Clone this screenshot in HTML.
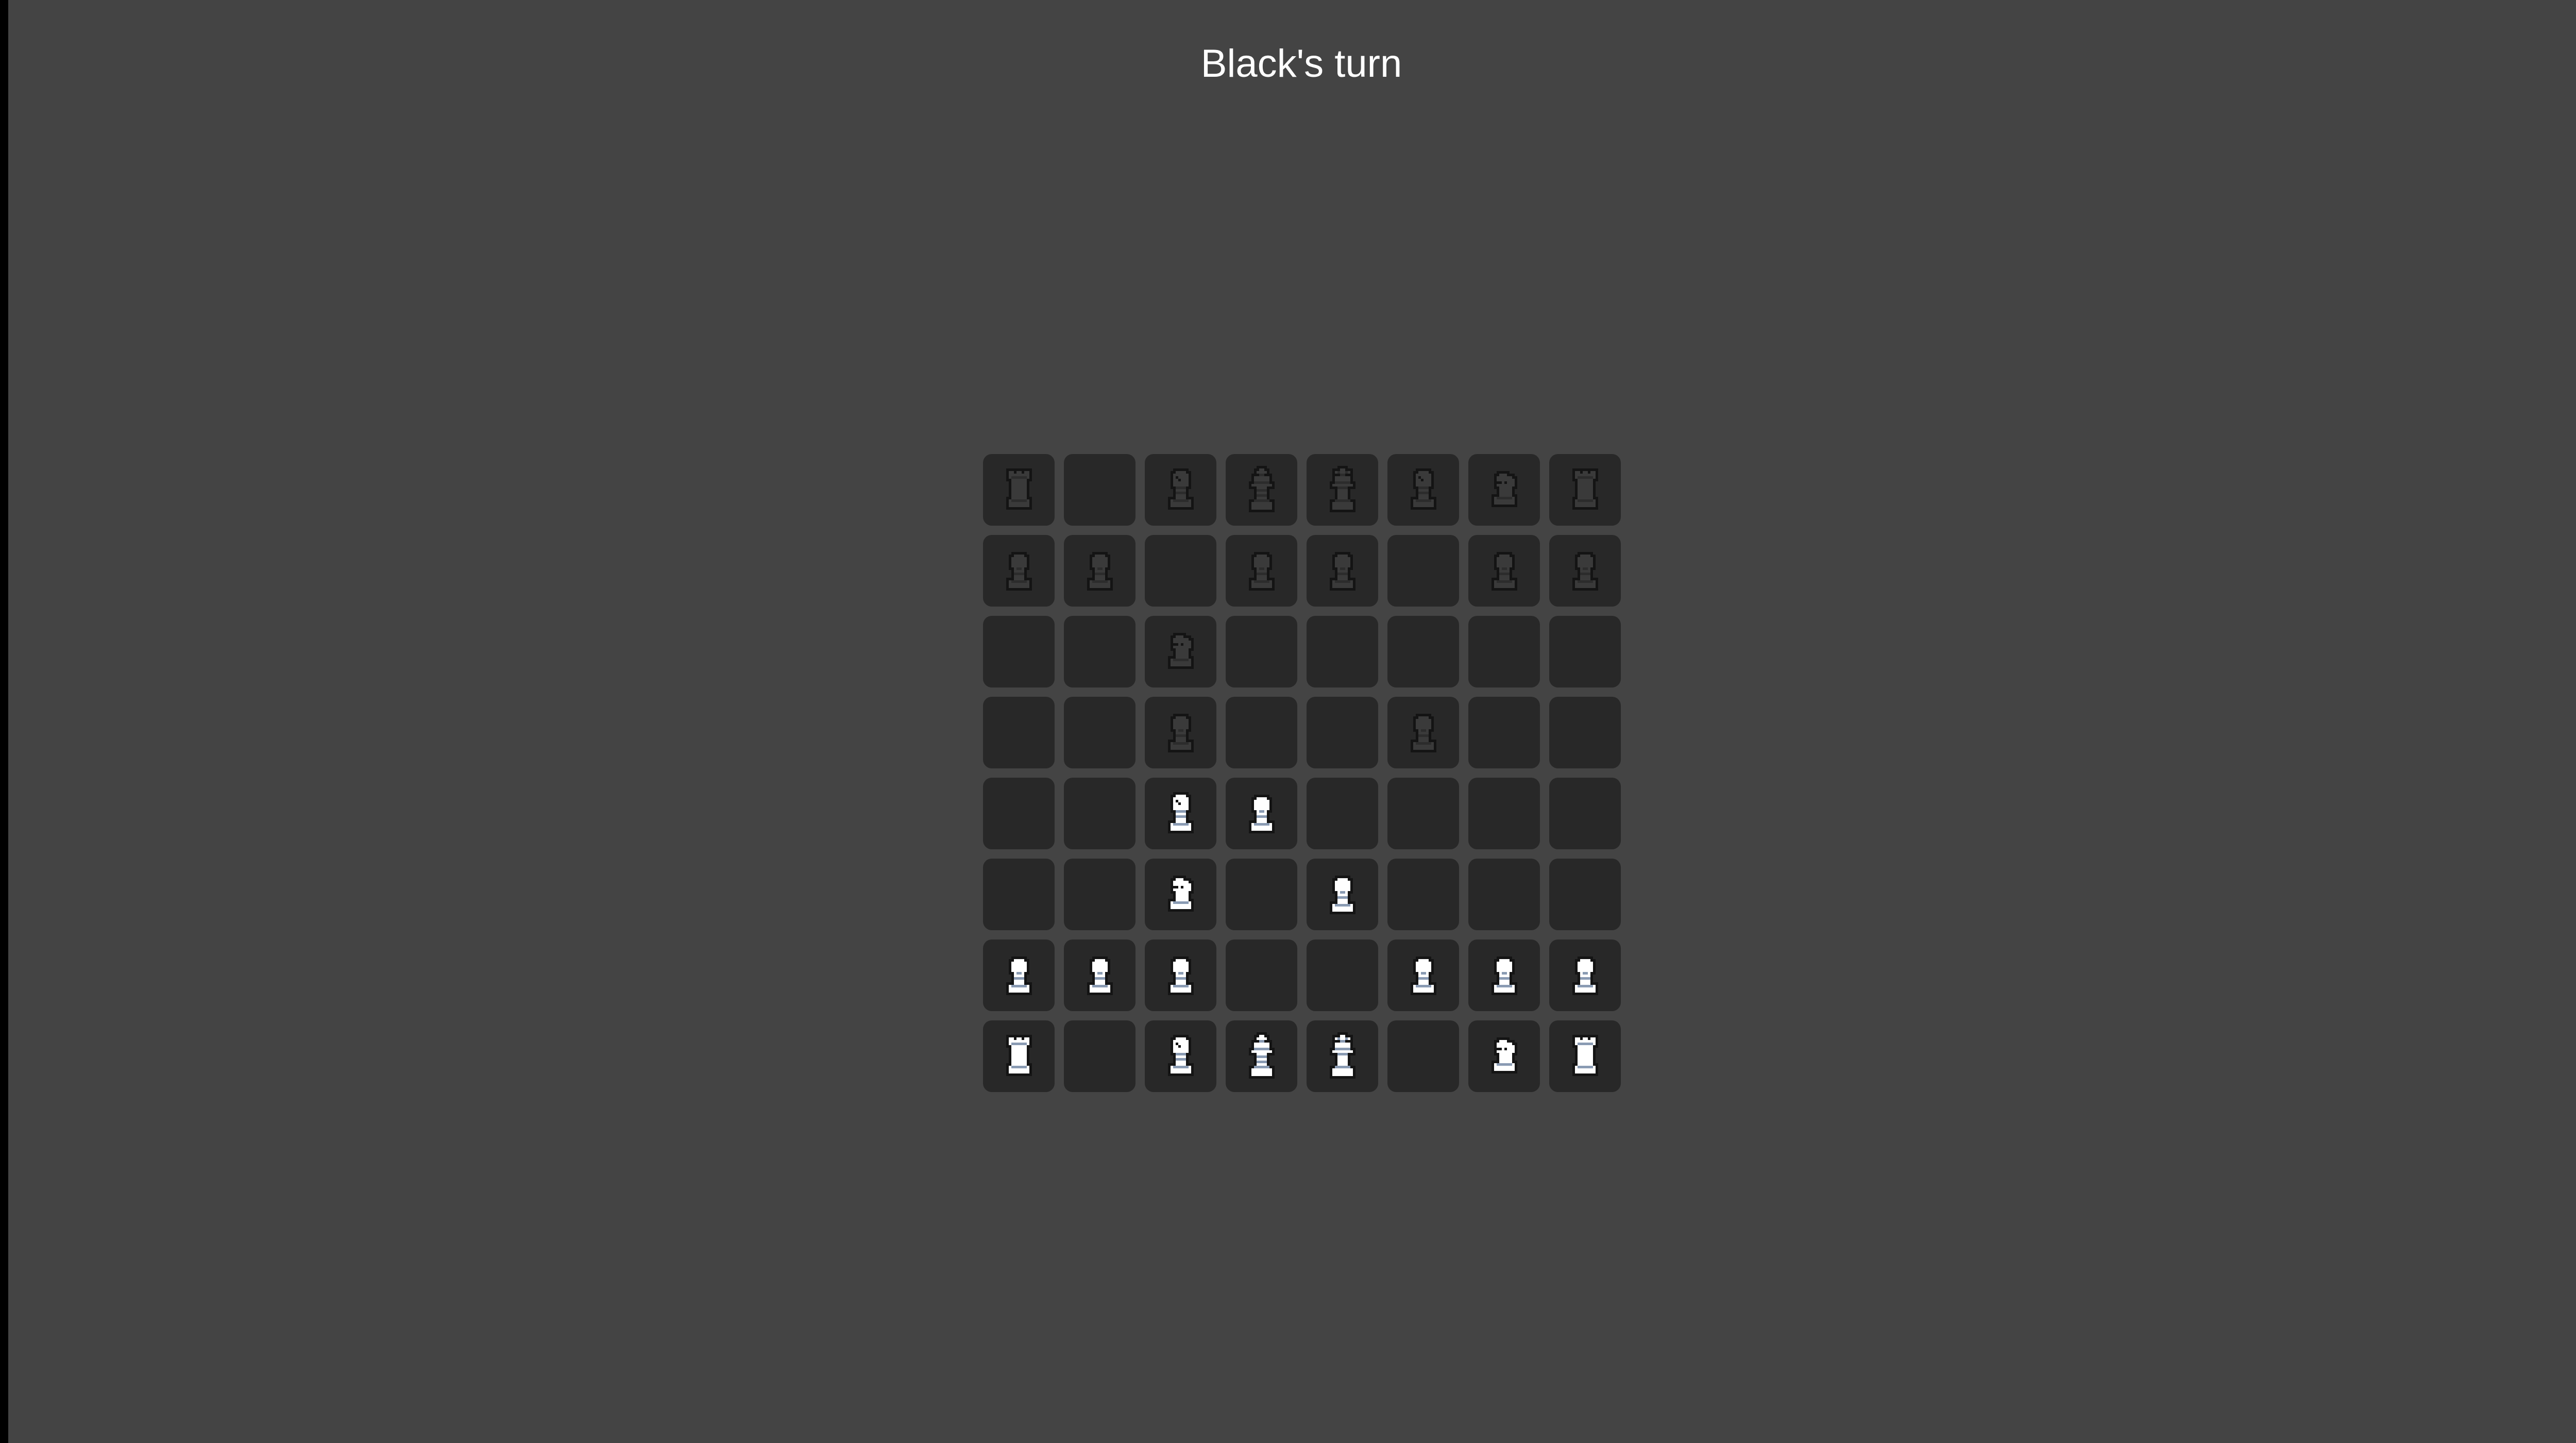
<!DOCTYPE html>
<html><head><meta charset="utf-8"><style>
html,body{margin:0;padding:0;width:5074px;height:2800px;background:#000;overflow:hidden}
#main{position:absolute;left:16px;top:0;width:5020px;height:2800px;background:#444444}
h1{position:absolute;left:0;width:5020px;top:74px;margin:0;text-align:center;color:#fff;font:400 76px "Liberation Sans",sans-serif;line-height:100px}
#board{position:absolute;left:1876px;top:881px;width:1240px;height:1240px}
.sq{position:absolute;width:139px;height:139px;background:#282828;border-radius:17px}
.sq svg{position:absolute;left:30px;top:18px;width:80px;height:100px}
</style></head><body>
<svg width="0" height="0" style="position:absolute">
<defs>
<symbol id="pawn" viewBox="0 0 16 20"><g stroke-width="2" stroke="#141414" stroke-linejoin="miter"><rect x="6" y="4" width="4" height="1"/><rect x="5" y="5" width="6" height="4"/><rect x="6" y="9" width="4" height="5"/><rect x="4" y="14" width="8" height="3"/></g><g fill="var(--f)"><rect x="6" y="4" width="4" height="1"/><rect x="5" y="5" width="6" height="4"/><rect x="6" y="9" width="4" height="5"/><rect x="4" y="14" width="8" height="3"/></g><g fill="var(--s)"><rect x="7" y="9" width="2" height="1"/><rect x="6" y="11" width="4" height="1"/><rect x="5" y="14" width="6" height="1"/></g></symbol>
<symbol id="rook" viewBox="0 0 16 20"><g stroke-width="2" stroke="#141414"><rect x="4" y="3" width="8" height="3"/><rect x="5" y="6" width="6" height="8"/><rect x="4" y="14" width="8" height="3"/></g><g fill="var(--f)"><rect x="4" y="3" width="8" height="3"/><rect x="5" y="6" width="6" height="8"/><rect x="4" y="14" width="8" height="3"/></g><g fill="#141414"><rect x="6" y="3" width="1" height="1"/><rect x="9" y="3" width="1" height="1"/></g><g fill="var(--s)"><rect x="5" y="5" width="6" height="1"/><rect x="5" y="14" width="6" height="1"/></g></symbol>
<symbol id="bishop" viewBox="0 0 16 20"><g stroke-width="2" stroke="#141414"><rect x="6" y="3" width="4" height="1"/><rect x="5" y="4" width="6" height="5"/><rect x="6" y="9" width="4" height="5"/><rect x="4" y="14" width="8" height="3"/></g><g fill="var(--f)"><rect x="6" y="3" width="4" height="1"/><rect x="5" y="4" width="6" height="5"/><rect x="6" y="9" width="4" height="5"/><rect x="4" y="14" width="8" height="3"/></g><g fill="#141414"><rect x="6" y="5" width="1" height="1"/><rect x="7" y="6" width="1" height="1"/></g><g fill="var(--s)"><rect x="6" y="9" width="4" height="1"/><rect x="6" y="11" width="4" height="1"/><rect x="5" y="14" width="6" height="1"/></g></symbol>
<symbol id="knight" viewBox="0 0 16 20"><g stroke-width="2" stroke="#141414"><rect x="6" y="4" width="3" height="1"/><rect x="5" y="5" width="6" height="1"/><rect x="5" y="6" width="7" height="3"/><rect x="6" y="9" width="5" height="4"/><rect x="4" y="13" width="8" height="3"/></g><g fill="var(--f)"><rect x="6" y="4" width="3" height="1"/><rect x="5" y="5" width="6" height="1"/><rect x="5" y="6" width="7" height="3"/><rect x="6" y="9" width="5" height="4"/><rect x="4" y="13" width="8" height="3"/></g><g fill="#141414"><rect x="8" y="7" width="1" height="1"/><rect x="5" y="7" width="2" height="1"/></g><g fill="var(--s)"><rect x="5" y="13" width="6" height="1"/></g></symbol>
<symbol id="queen" viewBox="0 0 16 20"><g stroke-width="2" stroke="#141414"><rect x="7" y="2" width="2" height="1"/><rect x="6" y="3" width="4" height="1"/><rect x="7" y="4" width="2" height="1"/><rect x="5" y="5" width="6" height="3"/><rect x="4" y="8" width="8" height="1"/><rect x="6" y="9" width="4" height="6"/><rect x="4" y="15" width="8" height="3"/></g><g fill="var(--f)"><rect x="7" y="2" width="2" height="1"/><rect x="6" y="3" width="4" height="1"/><rect x="7" y="4" width="2" height="1"/><rect x="5" y="5" width="6" height="3"/><rect x="4" y="8" width="8" height="1"/><rect x="6" y="9" width="4" height="6"/><rect x="4" y="15" width="8" height="3"/></g><g fill="var(--s)"><rect x="7" y="4" width="2" height="1"/><rect x="5" y="7" width="6" height="1"/><rect x="6" y="10" width="4" height="1"/><rect x="6" y="12" width="4" height="1"/><rect x="5" y="14" width="6" height="1"/></g></symbol>
<symbol id="king" viewBox="0 0 16 20"><g stroke-width="2" stroke="#141414"><rect x="7" y="2" width="2" height="3"/><rect x="5" y="3" width="6" height="1"/><rect x="5" y="5" width="6" height="3"/><rect x="4" y="8" width="8" height="1"/><rect x="6" y="9" width="4" height="6"/><rect x="4" y="15" width="8" height="3"/></g><g fill="var(--f)"><rect x="7" y="2" width="2" height="3"/><rect x="5" y="3" width="6" height="1"/><rect x="5" y="5" width="6" height="3"/><rect x="4" y="8" width="8" height="1"/><rect x="6" y="9" width="4" height="6"/><rect x="4" y="15" width="8" height="3"/></g><g fill="var(--s)"><rect x="6" y="3" width="1" height="1"/><rect x="9" y="3" width="1" height="1"/><rect x="7" y="4" width="2" height="1"/><rect x="5" y="7" width="6" height="1"/><rect x="6" y="9" width="4" height="1"/><rect x="5" y="14" width="6" height="1"/></g></symbol>
</defs></svg>
<div id="main"><h1>Black's turn</h1>
<div id="board">
<div class="sq" style="left:16px;top:0"><svg style="--f:#3a3a3a;--s:#2c2c2c"><use href="#rook"/></svg></div>
<div class="sq" style="left:173px;top:0"></div>
<div class="sq" style="left:330px;top:0"><svg style="--f:#3a3a3a;--s:#2c2c2c"><use href="#bishop"/></svg></div>
<div class="sq" style="left:487px;top:0"><svg style="--f:#3a3a3a;--s:#2c2c2c"><use href="#queen"/></svg></div>
<div class="sq" style="left:644px;top:0"><svg style="--f:#3a3a3a;--s:#2c2c2c"><use href="#king"/></svg></div>
<div class="sq" style="left:801px;top:0"><svg style="--f:#3a3a3a;--s:#2c2c2c"><use href="#bishop"/></svg></div>
<div class="sq" style="left:958px;top:0"><svg style="--f:#3a3a3a;--s:#2c2c2c"><use href="#knight"/></svg></div>
<div class="sq" style="left:1115px;top:0"><svg style="--f:#3a3a3a;--s:#2c2c2c"><use href="#rook"/></svg></div>
<div class="sq" style="left:16px;top:157px"><svg style="--f:#3a3a3a;--s:#2c2c2c"><use href="#pawn"/></svg></div>
<div class="sq" style="left:173px;top:157px"><svg style="--f:#3a3a3a;--s:#2c2c2c"><use href="#pawn"/></svg></div>
<div class="sq" style="left:330px;top:157px"></div>
<div class="sq" style="left:487px;top:157px"><svg style="--f:#3a3a3a;--s:#2c2c2c"><use href="#pawn"/></svg></div>
<div class="sq" style="left:644px;top:157px"><svg style="--f:#3a3a3a;--s:#2c2c2c"><use href="#pawn"/></svg></div>
<div class="sq" style="left:801px;top:157px"></div>
<div class="sq" style="left:958px;top:157px"><svg style="--f:#3a3a3a;--s:#2c2c2c"><use href="#pawn"/></svg></div>
<div class="sq" style="left:1115px;top:157px"><svg style="--f:#3a3a3a;--s:#2c2c2c"><use href="#pawn"/></svg></div>
<div class="sq" style="left:16px;top:314px"></div>
<div class="sq" style="left:173px;top:314px"></div>
<div class="sq" style="left:330px;top:314px"><svg style="--f:#3a3a3a;--s:#2c2c2c"><use href="#knight"/></svg></div>
<div class="sq" style="left:487px;top:314px"></div>
<div class="sq" style="left:644px;top:314px"></div>
<div class="sq" style="left:801px;top:314px"></div>
<div class="sq" style="left:958px;top:314px"></div>
<div class="sq" style="left:1115px;top:314px"></div>
<div class="sq" style="left:16px;top:471px"></div>
<div class="sq" style="left:173px;top:471px"></div>
<div class="sq" style="left:330px;top:471px"><svg style="--f:#3a3a3a;--s:#2c2c2c"><use href="#pawn"/></svg></div>
<div class="sq" style="left:487px;top:471px"></div>
<div class="sq" style="left:644px;top:471px"></div>
<div class="sq" style="left:801px;top:471px"><svg style="--f:#3a3a3a;--s:#2c2c2c"><use href="#pawn"/></svg></div>
<div class="sq" style="left:958px;top:471px"></div>
<div class="sq" style="left:1115px;top:471px"></div>
<div class="sq" style="left:16px;top:628px"></div>
<div class="sq" style="left:173px;top:628px"></div>
<div class="sq" style="left:330px;top:628px"><svg style="--f:#fff;--s:#8a9bb3"><use href="#bishop"/></svg></div>
<div class="sq" style="left:487px;top:628px"><svg style="--f:#fff;--s:#8a9bb3"><use href="#pawn"/></svg></div>
<div class="sq" style="left:644px;top:628px"></div>
<div class="sq" style="left:801px;top:628px"></div>
<div class="sq" style="left:958px;top:628px"></div>
<div class="sq" style="left:1115px;top:628px"></div>
<div class="sq" style="left:16px;top:785px"></div>
<div class="sq" style="left:173px;top:785px"></div>
<div class="sq" style="left:330px;top:785px"><svg style="--f:#fff;--s:#8a9bb3"><use href="#knight"/></svg></div>
<div class="sq" style="left:487px;top:785px"></div>
<div class="sq" style="left:644px;top:785px"><svg style="--f:#fff;--s:#8a9bb3"><use href="#pawn"/></svg></div>
<div class="sq" style="left:801px;top:785px"></div>
<div class="sq" style="left:958px;top:785px"></div>
<div class="sq" style="left:1115px;top:785px"></div>
<div class="sq" style="left:16px;top:942px"><svg style="--f:#fff;--s:#8a9bb3"><use href="#pawn"/></svg></div>
<div class="sq" style="left:173px;top:942px"><svg style="--f:#fff;--s:#8a9bb3"><use href="#pawn"/></svg></div>
<div class="sq" style="left:330px;top:942px"><svg style="--f:#fff;--s:#8a9bb3"><use href="#pawn"/></svg></div>
<div class="sq" style="left:487px;top:942px"></div>
<div class="sq" style="left:644px;top:942px"></div>
<div class="sq" style="left:801px;top:942px"><svg style="--f:#fff;--s:#8a9bb3"><use href="#pawn"/></svg></div>
<div class="sq" style="left:958px;top:942px"><svg style="--f:#fff;--s:#8a9bb3"><use href="#pawn"/></svg></div>
<div class="sq" style="left:1115px;top:942px"><svg style="--f:#fff;--s:#8a9bb3"><use href="#pawn"/></svg></div>
<div class="sq" style="left:16px;top:1099px"><svg style="--f:#fff;--s:#8a9bb3"><use href="#rook"/></svg></div>
<div class="sq" style="left:173px;top:1099px"></div>
<div class="sq" style="left:330px;top:1099px"><svg style="--f:#fff;--s:#8a9bb3"><use href="#bishop"/></svg></div>
<div class="sq" style="left:487px;top:1099px"><svg style="--f:#fff;--s:#8a9bb3"><use href="#queen"/></svg></div>
<div class="sq" style="left:644px;top:1099px"><svg style="--f:#fff;--s:#8a9bb3"><use href="#king"/></svg></div>
<div class="sq" style="left:801px;top:1099px"></div>
<div class="sq" style="left:958px;top:1099px"><svg style="--f:#fff;--s:#8a9bb3"><use href="#knight"/></svg></div>
<div class="sq" style="left:1115px;top:1099px"><svg style="--f:#fff;--s:#8a9bb3"><use href="#rook"/></svg></div>
</div></div>
</body></html>
